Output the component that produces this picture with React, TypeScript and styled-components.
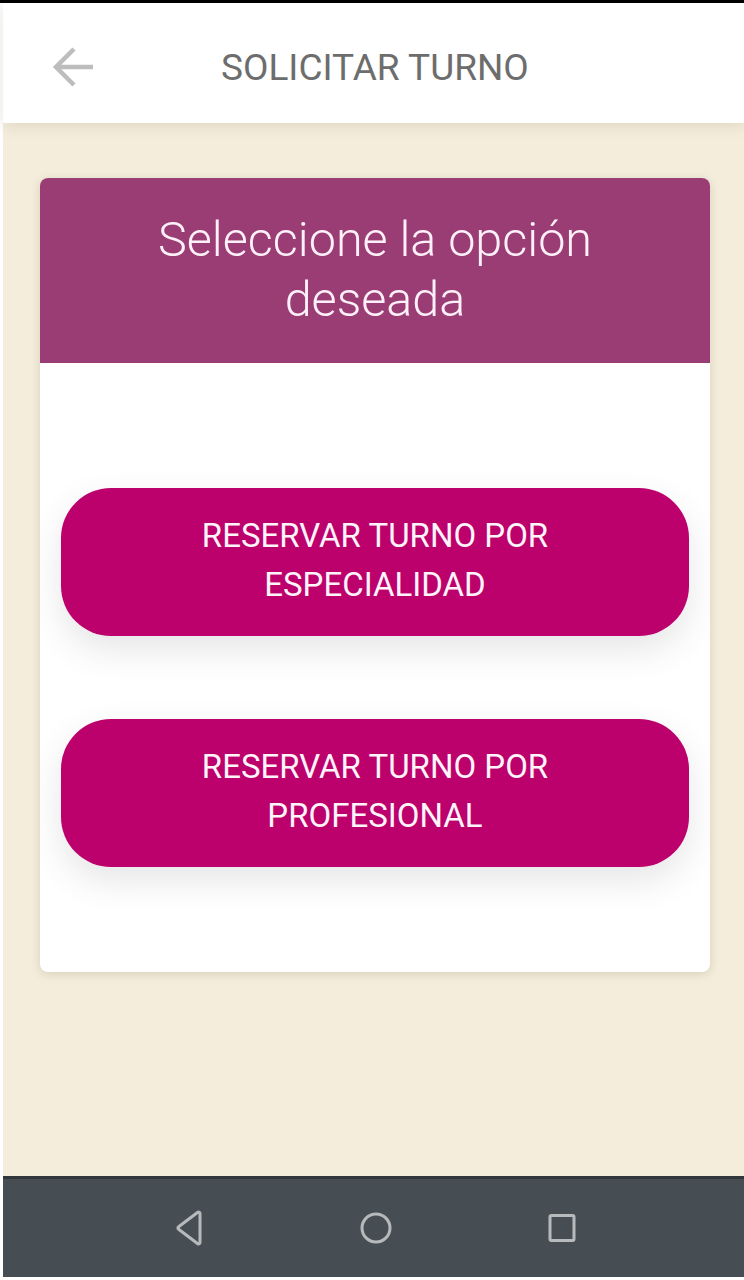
import styled, { createGlobalStyle } from 'styled-components';

const GlobalStyle = createGlobalStyle`
  html, body {
    margin: 0;
    padding: 0;
    background: #ffffff;
  }
  body {
    font-family: Roboto, "Noto Sans", "Liberation Sans", sans-serif;
  }
`;

const Screen = styled.div`
  width: 744px;
  height: 1280px;
  display: flex;
  flex-direction: column;
  box-sizing: border-box;
  border-top: 3px solid #000000;
  padding-left: 3px;
  padding-bottom: 3px;
  background: #ffffff;
  overflow: hidden;
`;

const TopBar = styled.header`
  height: 120px;
  flex-shrink: 0;
  box-sizing: border-box;
  padding-top: 8px;
  display: flex;
  align-items: center;
  background: #ffffff;
  position: relative;
  z-index: 1;
  box-shadow: 0 2px 14px rgba(120, 100, 60, 0.18);
`;

const BackButton = styled.button`
  width: 48px;
  height: 48px;
  margin-left: 47px;
  padding: 0;
  border: none;
  background: transparent;
  display: flex;
  align-items: center;
  justify-content: center;
`;

const Title = styled.h1`
  margin: 0 0 0 123px;
  font-family: Roboto, "Liberation Sans", sans-serif;
  font-weight: 400;
  font-size: 37px;
  color: #6d6d6d;
  letter-spacing: 0;
`;

const Content = styled.main`
  flex: 1;
  background: #f4eddc;
  padding: 55px 34px 0 37px;
`;

const Card = styled.section`
  background: #ffffff;
  border-radius: 8px;
  overflow: hidden;
  box-shadow: 0 2px 10px rgba(120, 100, 60, 0.22);
`;

const CardHeader = styled.div`
  height: 185px;
  background: #9b3d75;
  display: flex;
  align-items: center;
  justify-content: center;
  text-align: center;
  padding-bottom: 2px;
  box-sizing: border-box;
`;

const CardTitle = styled.h2`
  margin: 0;
  font-family: Roboto, "Liberation Sans", sans-serif;
  font-weight: 300;
  font-size: 48.5px;
  line-height: 60px;
  color: #fdf0f8;
  width: 500px;
`;

const Options = styled.div`
  display: flex;
  flex-direction: column;
  gap: 83px;
  padding: 125px 21px 105px 21px;
`;

const OptionButton = styled.button`
  height: 148px;
  border: none;
  border-radius: 50px;
  background: #bc006c;
  color: #fff4fa;
  font-family: Roboto, "Liberation Sans", sans-serif;
  font-size: 33px;
  font-weight: 400;
  line-height: 49px;
  text-transform: uppercase;
  padding: 0 40px 4px;
  box-shadow: 0 14px 34px rgba(60, 60, 80, 0.13);
  cursor: pointer;
`;

const NavBar = styled.nav`
  height: 98px;
  flex-shrink: 0;
  background: #464e54;
  border-top: 3px solid #30363a;
  display: flex;
  align-items: center;
  justify-content: center;
  gap: 138px;
  padding-left: 4px;
`;

const NavIcon = styled.svg`
  width: 48px;
  height: 48px;
  display: block;
`;

export default function App() {
  return (
    <>
      <GlobalStyle />
      <Screen>
        <TopBar>
          <BackButton aria-label="Volver">
            <svg width="44" height="44" viewBox="0 0 44 44">
              <path
                d="M41 22H6M22 4L4 22l18 18"
                fill="none"
                stroke="#bdbdbd"
                strokeWidth="4.5"
              />
            </svg>
          </BackButton>
          <Title>SOLICITAR TURNO</Title>
        </TopBar>
        <Content>
          <Card>
            <CardHeader>
              <CardTitle>Seleccione la opción deseada</CardTitle>
            </CardHeader>
            <Options>
              <OptionButton>
                Reservar turno por
                <br />
                especialidad
              </OptionButton>
              <OptionButton>
                Reservar turno por
                <br />
                profesional
              </OptionButton>
            </Options>
          </Card>
        </Content>
        <NavBar>
          <NavIcon viewBox="0 0 48 48">
            <path
              d="M34 9.5v29c0 1.2-1.2 1.9-2.2 1.2L12.6 25.2c-.9-.6-.9-1.8 0-2.4L31.8 8.3c1-.7 2.2 0 2.2 1.2z"
              fill="none"
              stroke="#b6babc"
              strokeWidth="3"
              strokeLinejoin="round"
            />
          </NavIcon>
          <NavIcon viewBox="0 0 48 48">
            <circle cx="24" cy="24" r="14" fill="none" stroke="#b6babc" strokeWidth="3" />
          </NavIcon>
          <NavIcon viewBox="0 0 48 48">
            <rect x="12" y="11.5" width="24" height="25" rx="1.5" fill="none" stroke="#b6babc" strokeWidth="3" />
          </NavIcon>
        </NavBar>
      </Screen>
    </>
  );
}
